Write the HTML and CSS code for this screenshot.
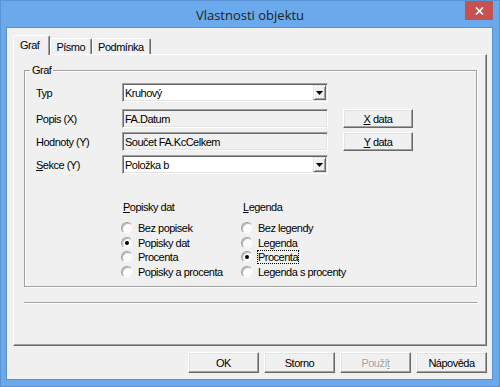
FILE: index.html
```html
<!DOCTYPE html>
<html lang="cs">
  <head>
    <meta charset="utf-8">
    <title>Vlastnosti objektu</title>
    <link rel="stylesheet" href="styles.css">
  </head>
  <body>
    <div class="window">
      <div class="titlebar">
        <div class="title">Vlastnosti objektu</div>
        <button class="close">
          <svg width="9" height="8" viewBox="0 0 9 8">
            <path d="M1 0.5 L8 7.5 M8 0.5 L1 7.5" stroke="#fff" stroke-width="1.6" />
          </svg>
        </button>
      </div>

      <div class="client">
        <div class="tabs">
          <div class="tab active">Graf</div>
          <div class="tab">Písmo</div>
          <div class="tab">Podmínka</div>
        </div>

        <div class="tab-panel">
          <fieldset class="group">
            <legend>Graf</legend>
            <div class="group-body">
              <div class="row first">
                <span class="label">Typ</span>
                <div class="field white combo">
                  <span>Kruhový</span>
                  <span class="drop">
                    <svg width="7" height="4" viewBox="0 0 7 4"><path d="M0 0 H7 L3.5 4 Z" fill="#000" /></svg>
                  </span>
                </div>
              </div>
              <div class="row">
                <span class="label">Popis (X)</span>
                <div class="field">FA.Datum</div>
                <button class="btn side-btn"><u>X</u> data</button>
              </div>
              <div class="row">
                <span class="label">Hodnoty (Y)</span>
                <div class="field">Součet FA.KcCelkem</div>
                <button class="btn side-btn"><u>Y</u> data</button>
              </div>
              <div class="row">
                <span class="label"><u>S</u>ekce (Y)</span>
                <div class="field white combo">
                  <span>Položka b</span>
                  <span class="drop">
                    <svg width="7" height="4" viewBox="0 0 7 4"><path d="M0 0 H7 L3.5 4 Z" fill="#000" /></svg>
                  </span>
                </div>
              </div>

              <div class="options">
                <div class="opt-col">
                  <div class="opt-head"><u>P</u>opisky dat</div>
                  <div class="radio"><span class="dot"></span>Bez popisek</div>
                  <div class="radio"><span class="dot on"></span>Popisky dat</div>
                  <div class="radio"><span class="dot"></span>Procenta</div>
                  <div class="radio"><span class="dot"></span>Popisky a procenta</div>
                </div>
                <div class="opt-col">
                  <div class="opt-head"><u>L</u>egenda</div>
                  <div class="radio"><span class="dot"></span>Bez legendy</div>
                  <div class="radio"><span class="dot"></span>Legenda</div>
                  <div class="radio"><span class="dot on"></span><span class="focus">Procenta</span></div>
                  <div class="radio"><span class="dot"></span>Legenda s procenty</div>
                </div>
              </div>
            </div>
          </fieldset>
          <div class="separator"></div>
        </div>

        <div class="footer">
          <button class="btn">OK</button>
          <button class="btn">Storno</button>
          <button class="btn disabled">Použí<u>t</u></button>
          <button class="btn">Nápověda</button>
        </div>
      </div>
    </div>
  </body>
</html>
```

FILE: styles.css
```css
body {
  margin: 0;
  font-family: "Liberation Sans", Arial, sans-serif;
  font-size: 11px;
  letter-spacing: -0.5px;
  color: #000;
}

.window {
  width: 500px;
  height: 387px;
  box-sizing: border-box;
  background: #6aa9ec;
  border: 1px solid #5a92d4;
  display: flex;
  flex-direction: column;
}

.titlebar {
  height: 27px;
  flex-shrink: 0;
  display: grid;
  grid-template-columns: 1fr auto 1fr;
  align-items: center;
}

.title {
  grid-column: 2;
  font-family: "Open Sans", sans-serif;
  font-size: 13px;
  letter-spacing: 0;
  color: #222;
}

.close {
  grid-column: 3;
  justify-self: end;
  align-self: start;
  width: 28px;
  height: 19px;
  margin-right: 6px;
  padding: 0;
  border: none;
  background: #c75050;
  display: flex;
  align-items: center;
  justify-content: center;
}

.client {
  flex: 1;
  margin: 0 7px 7px 6px;
  padding: 7px 5px 0 6px;
  background: #f0f0f0;
  box-shadow: 0 0 0 1px #5b90cf;
  display: flex;
  flex-direction: column;
}

/* tabs */
.tabs {
  display: flex;
  align-items: flex-end;
  height: 19px;
}

.tab {
  height: 16px;
  box-sizing: border-box;
  padding: 2px 6px 0 5px;
  border: 1px solid #fff;
  border-right-color: #696969;
  border-bottom: none;
  border-radius: 2px 2px 0 0;
  box-shadow: inset -1px 0 0 #a0a0a0;
  line-height: 13px;
}

.tab.active {
  height: 20px;
  margin-bottom: -1px;
  padding: 3px 10px 0 6px;
  position: relative;
  z-index: 1;
  background: #f0f0f0;
}

.tab-panel {
  height: 292px;
  box-sizing: border-box;
  border: 1px solid;
  border-color: #fff #696969 #696969 #fff;
  box-shadow: inset -1px -1px 0 #a0a0a0;
  padding: 9px 9px 0 10px;
}

/* group box */
.group {
  margin: 0;
  padding: 0 0 7px;
  min-width: 0;
  border: 1px solid #a0a0a0;
  box-shadow: 1px 1px 0 #fff, inset 1px 1px 0 #fff;
}

.group legend {
  margin-left: 5px;
  padding: 0 2px;
  line-height: 12px;
  background: #f0f0f0;
}

.group-body {
  padding: 7px 11px 0;
}

.row {
  display: flex;
  align-items: center;
  height: 19px;
}

.row + .row {
  margin-top: 4px;
}

.row.first {
  margin-bottom: 7px;
}

.label {
  width: 86px;
}

.field {
  width: 206px;
  height: 19px;
  box-sizing: border-box;
  border: 1px solid;
  border-color: #a0a0a0 #fff #fff #a0a0a0;
  box-shadow: inset 1px 1px 0 #696969, inset -1px -1px 0 #e3e3e3;
  padding: 0 3px 0 2px;
  display: flex;
  align-items: center;
}

.field.white {
  background: #fff;
}

.field.combo {
  padding-right: 1px;
}

.drop {
  margin-left: auto;
  width: 13px;
  height: 15px;
  box-sizing: border-box;
  border: 1px solid;
  border-color: #e3e3e3 #696969 #696969 #e3e3e3;
  box-shadow: inset 1px 1px 0 #fff, inset -1px -1px 0 #a0a0a0;
  background: #f0f0f0;
  display: flex;
  align-items: center;
  justify-content: center;
}

.btn {
  box-sizing: border-box;
  padding: 0;
  border: 1px solid;
  border-color: #fff #696969 #696969 #fff;
  box-shadow: inset -1px -1px 0 #a0a0a0, inset 1px 1px 0 #e3e3e3;
  background: #f0f0f0;
  font: inherit;
  letter-spacing: inherit;
  color: #000;
}

.side-btn {
  width: 70px;
  height: 19px;
  margin-left: 15px;
}

.btn.disabled {
  color: #a0a0a0;
  text-shadow: 1px 1px 0 #fff;
}

/* radio options */
.options {
  display: flex;
  margin: 26px 0 0 85px;
}

.opt-col {
  width: 120px;
}

.opt-head {
  line-height: 14px;
  padding-left: 2px;
  margin-bottom: 7px;
}

.radio {
  display: flex;
  align-items: center;
  height: 14.5px;
}

.dot {
  width: 12px;
  height: 12px;
  box-sizing: border-box;
  margin-right: 5px;
  border-radius: 50%;
  border: 1px solid;
  border-color: #a0a0a0 #f4f4f4 #f4f4f4 #a0a0a0;
  box-shadow: inset 1px 1px 0 #b8b8b8;
  background: #fbfbfb;
  display: flex;
  align-items: center;
  justify-content: center;
}

.dot.on::after {
  content: "";
  width: 4px;
  height: 4px;
  border-radius: 50%;
  background: #000;
}

.focus {
  outline: 1px dotted #000;
}

.separator {
  height: 1px;
  margin-top: 15px;
  background: #a0a0a0;
  box-shadow: 0 1px 0 #fff;
}

.footer {
  display: flex;
  justify-content: flex-end;
  gap: 5px;
  margin-top: 6px;
}

.footer .btn {
  width: 71px;
  height: 21px;
}
```
